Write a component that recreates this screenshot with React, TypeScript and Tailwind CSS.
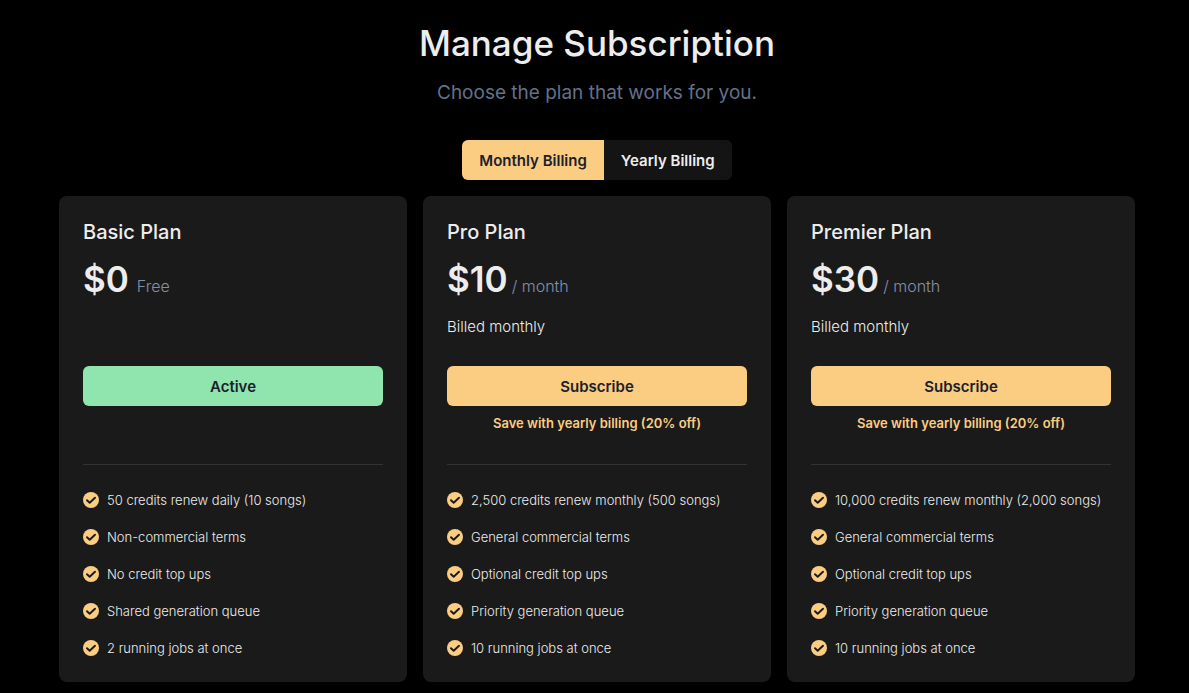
import { useState } from 'react'

type Plan = {
  name: string
  price: string
  unit: string
  gap: string
  billing?: string
  active?: boolean
  features: string[]
}

const plans: Plan[] = [
  {
    name: 'Basic Plan',
    price: '$0',
    unit: 'Free',
    gap: 'gap-2',
    active: true,
    features: [
      '50 credits renew daily (10 songs)',
      'Non-commercial terms',
      'No credit top ups',
      'Shared generation queue',
      '2 running jobs at once',
    ],
  },
  {
    name: 'Pro Plan',
    price: '$10',
    unit: '/ month',
    gap: 'gap-1',
    billing: 'Billed monthly',
    features: [
      '2,500 credits renew monthly (500 songs)',
      'General commercial terms',
      'Optional credit top ups',
      'Priority generation queue',
      '10 running jobs at once',
    ],
  },
  {
    name: 'Premier Plan',
    price: '$30',
    unit: '/ month',
    gap: 'gap-1',
    billing: 'Billed monthly',
    features: [
      '10,000 credits renew monthly (2,000 songs)',
      'General commercial terms',
      'Optional credit top ups',
      'Priority generation queue',
      '10 running jobs at once',
    ],
  },
]

function CheckIcon() {
  return (
    <svg viewBox="0 0 16 16" className="size-4 shrink-0" aria-hidden="true">
      <circle cx="8" cy="8" r="8" fill="#fbcd82" />
      <path
        d="M4 8.2 6.7 10.8 12 5.7"
        fill="none"
        stroke="#1a1a1a"
        strokeWidth="1.9"
        strokeLinecap="round"
        strokeLinejoin="round"
      />
    </svg>
  )
}

function PlanCard({ plan }: { plan: Plan }) {
  return (
    <section className="flex flex-col rounded-lg bg-[#1a1a1a] px-6 pt-6 pb-[23px]">
      <h2 className="text-xl leading-6 font-medium">{plan.name}</h2>

      <div className={`mt-3 flex h-12 items-baseline ${plan.gap}`}>
        <span className="text-[35px] leading-[46px] font-semibold">{plan.price}</span>
        <span className="text-base font-light text-[#8490ab]">{plan.unit}</span>
      </div>

      <p className="mt-[11px] h-6 text-[15px] leading-6 font-light">{plan.billing}</p>

      <button
        type="button"
        className={`mt-[27px] h-10 w-full rounded-md pt-0.5 text-[15px] font-semibold text-[#1a202c] ${
          plan.active ? 'bg-[#90e4ae]' : 'bg-[#fbcd82]'
        }`}
      >
        {plan.active ? 'Active' : 'Subscribe'}
      </button>

      <p className="mt-2 h-5 text-center text-[13px] leading-[18px] font-semibold whitespace-nowrap text-[#fbcd82]">
        {!plan.active && 'Save with yearly billing (20% off)'}
      </p>

      <hr className="mt-[30px] border-t border-[#333333]" />

      <ul className="mt-6 flex flex-col gap-[15px]">
        {plan.features.map((feature) => (
          <li key={feature} className="flex items-center gap-2 text-[13px] leading-[22px] font-light">
            <CheckIcon />
            <span className="whitespace-nowrap">{feature}</span>
          </li>
        ))}
      </ul>
    </section>
  )
}

export default function App() {
  const [yearly, setYearly] = useState(false)

  return (
    <main className="min-h-screen bg-black pt-4 pr-[54px] pb-[11px] pl-[59px] font-['Inter',sans-serif] text-[#ededed]">
      {/* Header */}
      <header className="text-center">
        <h1 className="text-[35px] leading-[54px] font-medium">Manage Subscription</h1>
        <p className="mt-[9px] text-[19px] leading-7 text-[#64718a]">Choose the plan that works for you.</p>
      </header>

      {/* Billing toggle */}
      <div className="mt-[33px] flex justify-center">
        <button
          type="button"
          aria-pressed={!yearly}
          onClick={() => setYearly(false)}
          className={`h-10 rounded-l-md px-[17px] pt-0.5 text-[15px] font-semibold ${
            yearly ? 'bg-[#141414]' : 'bg-[#fbcd82] text-[#1a202c]'
          }`}
        >
          Monthly Billing
        </button>
        <button
          type="button"
          aria-pressed={yearly}
          onClick={() => setYearly(true)}
          className={`h-10 rounded-r-md px-[17px] pt-0.5 text-[15px] font-semibold ${
            yearly ? 'bg-[#fbcd82] text-[#1a202c]' : 'bg-[#141414]'
          }`}
        >
          Yearly Billing
        </button>
      </div>

      {/* Plans */}
      <div className="mt-4 grid grid-cols-1 gap-4 md:grid-cols-3">
        {plans.map((plan) => (
          <PlanCard key={plan.name} plan={plan} />
        ))}
      </div>
    </main>
  )
}
